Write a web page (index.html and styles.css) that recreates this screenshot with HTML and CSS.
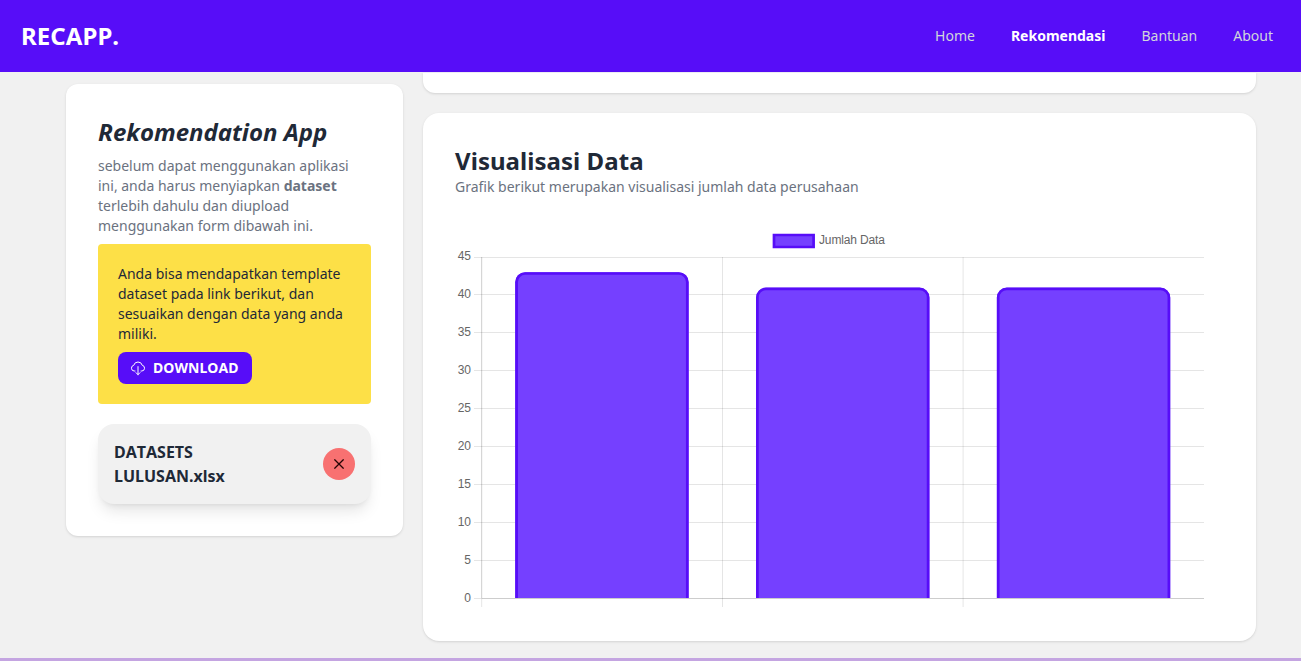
FILE: index.html
```html
<!DOCTYPE html>
<html lang="id">
<head>
<meta charset="utf-8">
<title>RECAPP.</title>
<link rel="stylesheet" href="styles.css">
</head>
<body>
<header class="navbar">
  <div class="brand">RECAPP.</div>
  <nav class="menu"><a>Home</a><a class="active">Rekomendasi</a><a>Bantuan</a><a>About</a></nav>
</header>
<main class="content">
  <aside class="card side">
    <h2 class="title italic">Rekomendation App</h2>
    <p class="desc">sebelum dapat menggunakan aplikasi ini, anda harus menyiapkan <b>dataset</b> terlebih dahulu dan diupload menggunakan form dibawah ini.</p>
    <div class="notice">
      <p>Anda bisa mendapatkan template dataset pada link berikut, dan sesuaikan dengan data yang anda miliki.</p>
      <button class="download">
        <svg width="16" height="16" viewBox="0 0 24 24" fill="none" stroke="currentColor" stroke-width="1.5" stroke-linecap="round" stroke-linejoin="round"><path d="M7.5 16.5H6.2A4.3 4.3 0 0 1 5.6 8 6.6 6.6 0 0 1 18.4 8a4.3 4.3 0 0 1-.6 8.5H16.5M9 19l3 3 3-3"/><path d="M12 22V10" stroke-width="2" stroke-opacity=".75"/></svg>
        <span>DOWNLOAD</span>
      </button>
    </div>
    <div class="file">
      <span class="filename">DATASETS LULUSAN.xlsx</span>
      <button class="remove" aria-label="Hapus"><svg width="10" height="10" viewBox="0 0 10 10" stroke="currentColor" stroke-width="1.3"><path d="M.4.4l9.2 9.2M9.6.4L.4 9.6"/></svg></button>
    </div>
  </aside>
  <div class="column">
    <section class="card upper"></section>
    <section class="card visual">
      <h2 class="title">Visualisasi Data</h2>
      <p class="desc">Grafik berikut merupakan visualisasi jumlah data perusahaan</p>
      <svg class="chart" width="769" height="384" viewBox="455 225 769 384">
        <g class="grid">
          <path d="M474 257.5H1204M474 294.5H1204M474 332.5H1204M474 370.5H1204M474 408.5H1204M474 446.5H1204M474 484.5H1204M474 522.5H1204M474 560.5H1204M474 598.5H1204"/>
          <path d="M481.7 257V607M722.5 257V607M963.1 257V607"/>
          <path d="M482 598.5H1204M481.7 257V598"/>
        </g>
        <g class="fill">
          <path d="M515.2 598V282.2a10 10 0 0 1 10-10H678.6a10 10 0 0 1 10 10V598z"/>
          <path d="M756.1 598V297.7a10 10 0 0 1 10-10H919.4a10 10 0 0 1 10 10V598z"/>
          <path d="M996.9 598V297.7a10 10 0 0 1 10-10H1160.2a10 10 0 0 1 10 10V598z"/>
          <path d="M774 235h40v12h-40z"/>
        </g>
        <g class="edge">
          <path d="M516.6 598V282a8.5 8.5 0 0 1 8.5-8.5H678.8a8.5 8.5 0 0 1 8.5 8.5V598"/>
          <path d="M757.4 598V297.4a8.5 8.5 0 0 1 8.5-8.5H919.6a8.5 8.5 0 0 1 8.5 8.5V598"/>
          <path d="M998.2 598V297.4a8.5 8.5 0 0 1 8.5-8.5H1160.4a8.5 8.5 0 0 1 8.5 8.5V598"/>
          <path d="M774 235h39.6v12h-39.6z"/>
        </g>
        <text x="819" y="244" textLength="66">Jumlah Data</text>
        <g text-anchor="end">
          <text x="471" y="260">45</text><text x="471" y="298">40</text><text x="471" y="336">35</text><text x="471" y="374">30</text><text x="471" y="412">25</text><text x="471" y="450">20</text><text x="471" y="488">15</text><text x="471" y="526">10</text><text x="471" y="564">5</text><text x="471" y="602">0</text>
        </g>
      </svg>
    </section>
  </div>
</main>
<footer class="foot"></footer>
</body>
</html>
```

FILE: styles.css
```css
* { box-sizing: border-box; }
body { margin: 0; height: 661px; overflow: hidden; display: flex; flex-direction: column; background: #f1f1f1; color: #1f2937; font: 14px/20px "Noto Sans", sans-serif; }
h2, p { margin: 0; }
button { border: 0; padding: 0; font: inherit; }
.navbar { height: 72px; flex: none; display: flex; align-items: center; justify-content: space-between; padding: 0 28px 0 21px; background: #570df8; color: #fff; }
.brand { font-size: 24px; line-height: 32px; font-weight: 700; font-kerning: none; letter-spacing: .06px; }
.menu { display: flex; gap: 36px; color: #d1d5db; }
.menu .active { color: #fff; font-weight: 700; }
.content { flex: 1; display: flex; gap: 20px; align-items: flex-start; padding: 0 45px 0 66px; }
.card { background: #fff; border-radius: 16px; box-shadow: 0 1px 3px rgba(0,0,0,.1), 0 1px 2px -1px rgba(0,0,0,.1); }
.side { width: 337px; height: 452px; margin-top: 12px; padding: 32px; border-radius: 12px; }
.title { font-size: 24px; line-height: 32px; font-weight: 700; font-kerning: none; letter-spacing: .05px; }
.italic { font-style: italic; margin-bottom: 8px; letter-spacing: 0; }
.desc { color: #6b7280; }
.notice { height: 160px; margin-top: 8px; padding: 20px; background: #fde047; border-radius: 4px; }
.download { display: flex; align-items: center; gap: 7px; width: 134px; height: 32px; margin-top: 8px; padding-left: 12px; background: #570df8; color: #fff; border-radius: 8px; font-weight: 700; font-kerning: none; letter-spacing: .06px; }
.file { display: flex; align-items: center; justify-content: space-between; height: 80px; margin-top: 20px; padding: 16px; background: #f1f1f1; border-radius: 16px; box-shadow: 0 10px 15px -3px rgba(0,0,0,.1), 0 4px 6px -4px rgba(0,0,0,.1); }
.filename { width: 150px; font-size: 16px; line-height: 24px; font-weight: 700; font-kerning: none; }
.remove { width: 32px; height: 32px; display: grid; place-items: center; border-radius: 50%; background: #f87171; color: #260505; }
.column { flex: 1; display: grid; gap: 20px; }
.upper { height: 21px; border-top: 1px solid #ececf3; border-radius: 0 0 12px 12px; }
.visual { height: 528px; padding: 32px; }
.chart { display: block; margin-top: 28px; font: 12px "Liberation Sans", Arial, sans-serif; fill: #666; }
.grid { fill: none; stroke: #000; stroke-opacity: .1; }
.fill { fill: #7540ff; }
.edge { fill: none; stroke: #570df8; stroke-width: 2.7; }
.foot { height: 3px; flex: none; background: #c4a5e1; }
```
